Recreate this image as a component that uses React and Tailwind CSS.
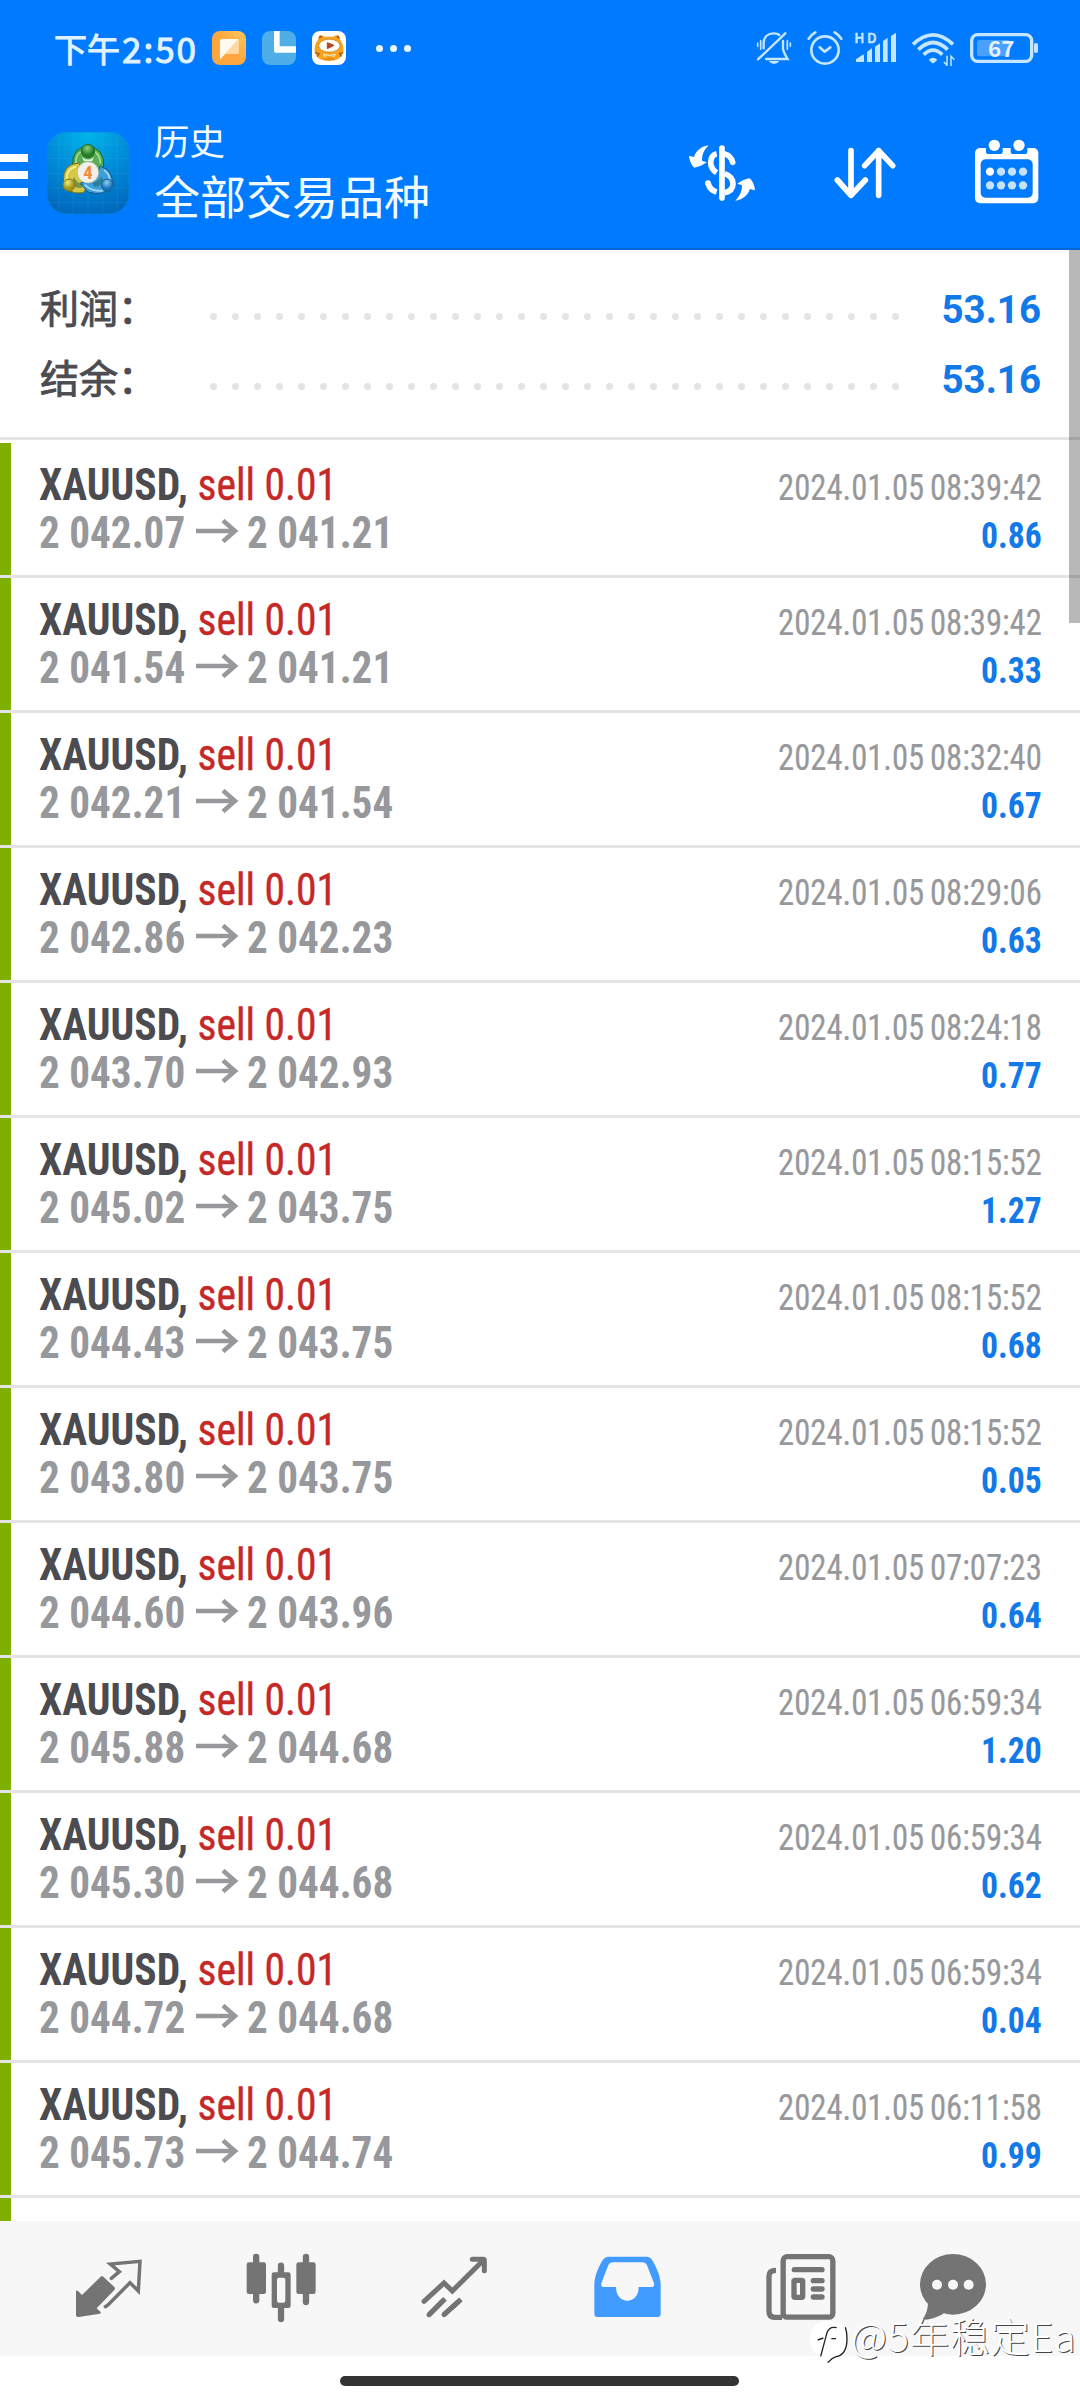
const deals = [
  ["2 042.07", "2 041.21", "2024.01.05 08:39:42", "0.86"],
  ["2 041.54", "2 041.21", "2024.01.05 08:39:42", "0.33"],
  ["2 042.21", "2 041.54", "2024.01.05 08:32:40", "0.67"],
  ["2 042.86", "2 042.23", "2024.01.05 08:29:06", "0.63"],
  ["2 043.70", "2 042.93", "2024.01.05 08:24:18", "0.77"],
  ["2 045.02", "2 043.75", "2024.01.05 08:15:52", "1.27"],
  ["2 044.43", "2 043.75", "2024.01.05 08:15:52", "0.68"],
  ["2 043.80", "2 043.75", "2024.01.05 08:15:52", "0.05"],
  ["2 044.60", "2 043.96", "2024.01.05 07:07:23", "0.64"],
  ["2 045.88", "2 044.68", "2024.01.05 06:59:34", "1.20"],
  ["2 045.30", "2 044.68", "2024.01.05 06:59:34", "0.62"],
  ["2 044.72", "2 044.68", "2024.01.05 06:59:34", "0.04"],
  ["2 045.73", "2 044.74", "2024.01.05 06:11:58", "0.99"],
];

function StatusBar() {
  return (
    <div className="flex h-24 items-center pl-[54px] pr-[41px]">
      <div className="-mt-px flex h-24 w-[158px] shrink-0 items-center whitespace-nowrap leading-[96px] text-[#e0f2ff] [-webkit-text-stroke:1px_#e0f2ff]">
        <span className="text-[33px]">下午</span>
        <span className="ml-[2px] text-[35px] tracking-[2px]">2:50</span>
      </div>
      <svg className="h-[34px] w-[34px]" viewBox="36 33 102 102">
        <defs>
          <linearGradient id="orange" x1="0" y1="1" x2="1" y2="0">
            <stop offset="0.5" stopColor="#ffa63f" />
            <stop offset="1" stopColor="#ffc95a" />
          </linearGradient>
        </defs>
        <rect x="36" y="33" width="102" height="102" rx="24" fill="url(#orange)" />
        <path d="M66 57H112Q117 57 117 62V97Q117 102 112 102H76L60 118V62Q60 57 66 57Z" fill="#ffd8a0" />
        <path d="M66 57H115L60 118V62Q60 57 66 57Z" fill="#fffaf0" />
      </svg>
      <svg className="ml-4 h-[34px] w-[34px]" viewBox="186 33 102 102">
        <rect x="186" y="33" width="102" height="102" rx="24" fill="#4faee8" />
        <path d="M222 33H239V79H288V98H228Q222 98 222 92Z" fill="#fff" />
      </svg>
      <svg className="ml-4 h-[34px] w-[34px]" viewBox="336 33 102 102">
        <rect x="336" y="33" width="102" height="102" rx="24" fill="#fffef8" />
        <path d="M354 60L358 47Q364 43 373 50H401Q410 43 416 47L421 60Q432 75 430 97Q424 122 387 123Q350 122 344 97Q342 75 354 60Z" fill="#f7a11e" />
        <path d="M357 55L361 49L366 52M410 52L414 49L418 55M346 98L357 101L352 110M429 98L419 101L424 110" fill="none" stroke="#a3561e" strokeWidth="4" />
        <ellipse cx="388" cy="77" rx="32" ry="19" fill="#fffdf4" stroke="#b5651d" strokeWidth="1.500" />
        <path d="M382 68L402 76L382 86Z" fill="#b0452c" stroke="#b0452c" strokeWidth="3" strokeLinejoin="round" />
        <path d="M369 103Q388 109 408 103M371 104l4 6 4-4M397 107l4 4 4-6" fill="none" stroke="#fff2ce" strokeWidth="3" />
        <path d="M374 119Q388 112 402 119" fill="none" stroke="#c97a1d" strokeWidth="3" />
      </svg>
      <div className="ml-[30px] flex gap-[7px]">
        <i className="h-[7px] w-[7px] rounded-full bg-[#e8f6ff]" />
        <i className="h-[7px] w-[7px] rounded-full bg-[#e8f6ff]" />
        <i className="h-[7px] w-[7px] rounded-full bg-[#e8f6ff]" />
      </div>
      <svg className="ml-auto h-9 w-[38px]" viewBox="45 30 114 108" fill="none" stroke="#c4e6ff" strokeWidth="7" strokeLinecap="round">
        <path d="M71 85V68C72 50 84 40 101 40C108 40 113 41 118 45M129 63V86C130 97 136 105 143 117H78" />
        <path d="M54 118L136 40" />
        <path d="M53 69V79M62 62V88M142 62V88M151 69V79" strokeWidth="5" />
        <path d="M86 123H118Q112 132 102 132Q92 132 86 123Z" fill="#c4e6ff" stroke="none" />
      </svg>
      <svg className="ml-[13px] h-9 w-[38px]" viewBox="198 30 114 108" fill="none" stroke="#c4e6ff" strokeWidth="8" strokeLinecap="round" strokeLinejoin="round">
        <circle cx="255" cy="90" r="41" />
        <path d="M239 82L254 95L271 82M206 56Q214 44 226 37M304 56Q296 44 284 37" />
      </svg>
      <svg className="ml-[10px] h-9 w-11 overflow-visible" viewBox="342 30 132 108" fill="#c4e6ff">
        <text x="343" y="69" fontSize="41" fontWeight="500" textLength="67" stroke="#c4e6ff" strokeWidth="1.500">HD</text>
        <path d="M348 126V118L368 104Q372 103 372 108V126ZM381 126V96L396 84V126ZM405 126V80L420 70V126ZM429 126V63L443 53V126ZM453 126V48L468 38V126Z" />
      </svg>
      <svg className="ml-3 h-9 w-[46px]" viewBox="510 30 138 108" fill="none" stroke="#c4e6ff" strokeWidth="11">
        <path d="M519 73Q579 16 639 73M535 89Q579 46 623 89M551 104Q579 77 607 104" />
        <path d="M566 119Q579 107 592 119L582 129Q579 131 576 129Z" fill="#c4e6ff" stroke="none" />
        <path d="M621 107V136L612 126M633 138V109L643 119" strokeWidth="4.500" />
      </svg>
      <svg className="ml-[13px] h-9 w-[70px]" viewBox="687 30 210 108">
        <rect x="695" y="44" width="180" height="80" rx="18" fill="none" stroke="#c4e6ff" strokeWidth="10" />
        <rect x="711" y="60" width="99" height="49" rx="7" fill="#4aa0ff" />
        <rect x="882" y="69" width="12" height="30" rx="6" fill="#c4e6ff" />
        <text x="744" y="110" fontSize="65" fontWeight="700" fill="#e2f3ff" textLength="79" lengthAdjust="spacingAndGlyphs">67</text>
      </svg>
    </div>
  );
}

function AppLogo() {
  return (
    <svg className="ml-[18px] mt-[35px] h-[84px] w-[84px] shrink-0" viewBox="138 33 252 252">
      <defs>
        <radialGradient id="bg" cx="0.5" cy="0" r="1">
          <stop offset="0" stopColor="#00b5ea" />
          <stop offset="0.55" stopColor="#0089d6" />
          <stop offset="1" stopColor="#0068bd" />
        </radialGradient>
        <radialGradient id="gr" cx="0.45" cy="0.3"><stop offset="0" stopColor="#8fd07c" /><stop offset="1" stopColor="#237d2a" /></radialGradient>
        <radialGradient id="ye" cx="0.4" cy="0.3"><stop offset="0" stopColor="#f2ea7c" /><stop offset="1" stopColor="#a39418" /></radialGradient>
        <radialGradient id="bl" cx="0.45" cy="0.3"><stop offset="0" stopColor="#8fd0f2" /><stop offset="1" stopColor="#1a70b8" /></radialGradient>
      </defs>
      <rect x="141" y="36" width="246" height="246" rx="58" fill="url(#bg)" stroke="#0a86e6" strokeWidth="2" />
      <path d="M176 45V272M220 37V281M264 37V281M308 37V281M352 45V272M142 72H386M142 116H386M142 160H386M142 204H386M142 248H386" stroke="#7fdcff" strokeOpacity=".16" strokeWidth="2" />
      <path d="M218 138Q214 82 264 80Q314 82 311 142L264 170Z" fill="#58ad55" stroke="#1c6426" strokeWidth="3" />
      <path d="M228 130Q226 92 264 91Q300 92 301 130" fill="none" stroke="#a6dc98" strokeWidth="5" />
      <path d="M236 129Q188 132 190 184Q200 226 250 218L272 184Z" fill="#d3c946" stroke="#776f18" strokeWidth="3" />
      <path d="M228 140Q198 146 201 178" fill="none" stroke="#f4ee98" strokeWidth="5" />
      <path d="M300 138Q342 152 337 196Q314 232 264 216L240 190L290 172Z" fill="#3f9fdc" stroke="#14568c" strokeWidth="3" />
      <path d="M254 194Q276 216 308 212M312 150Q328 160 329 180" fill="none" stroke="#a4dcf6" strokeWidth="5" />
      <path d="M222 170Q230 190 250 192L244 204Q224 206 214 190ZM276 188Q296 184 304 170L312 182Q300 200 284 200Z" fill="#245f52" fillOpacity=".5" />
      <path d="M246 112Q264 126 282 112L276 124H252Z" fill="#e0f3e0" />
      <circle cx="264" cy="93" r="20" fill="url(#gr)" stroke="#1f6a25" strokeWidth="3" />
      <circle cx="207" cy="195" r="18" fill="url(#ye)" stroke="#857a17" strokeWidth="3" />
      <circle cx="322" cy="195" r="18" fill="url(#bl)" stroke="#15609a" strokeWidth="3" />
      <circle cx="264" cy="157" r="32" fill="#f3f0ea" stroke="#a9b79c" strokeWidth="2" />
      <text x="264" y="177" textAnchor="middle" fontSize="56" fontWeight="700" fill="#f08c3c" className="font-['Roboto_Condensed','Roboto',sans-serif]">4</text>
    </svg>
  );
}

function TitleBar() {
  return (
    <div className="flex h-[154px] items-start border-b-2 border-[#0a68d2]">
      <div className="mt-[58px] flex w-7 shrink-0 flex-col gap-[9px]">
        <i className="h-2 bg-white" />
        <i className="h-2 bg-white" />
        <i className="h-2 bg-white" />
      </div>
      <AppLogo />
      <div className="ml-6 mt-[22px] whitespace-nowrap text-[#f2fbff]">
        <div className="text-[35.500px] leading-[44px]">历史</div>
        <div className="mt-[2px] text-[46px] leading-[60px]">全部交易品种</div>
      </div>
      <svg className="ml-auto mt-[46px] h-[62px] w-[72px]" viewBox="18 36 216 186" fill="none" stroke="#fff" strokeWidth="17">
        <path d="M126 54V204" strokeWidth="17" strokeLinecap="round" />
        <path d="M110 71Q92 75 92 99Q93 117 110 128" />
        <path d="M134 72Q152 75 158 97" strokeLinecap="round" />
        <path d="M84 159Q89 180 110 186" />
        <circle cx="84" cy="159" r="8.500" fill="#fff" stroke="none" />
        <path d="M134 131Q159 140 159 162Q158 183 134 188" />
        <path id="swap" d="M86 46C66 48 48 62 42 81L27 77C28 92 34 105 43 113C56 111 70 105 80 97L66 92C66 74 72 60 86 46Z" fill="#fff" stroke="none" />
        <use href="#swap" transform="rotate(180 126 129)" />
      </svg>
      <svg className="ml-[74px] mt-[50px] h-[54px] w-[66px]" viewBox="456 48 198 162" fill="none" stroke="#fff" strokeWidth="17" strokeLinecap="round" strokeLinejoin="round">
        <path d="M513 62V196M472 150L513 196L556 150M596 196V62M554 107L596 62L638 107" />
      </svg>
      <svg className="ml-[75px] mr-[39px] mt-[42px] h-[68px] w-[68px]" viewBox="879 24 204 204">
        <rect x="885" y="54" width="190" height="166" rx="15" fill="#fff" />
        <path d="M918 50H968V66Q968 72 962 72H924Q918 72 918 66ZM992 50H1042V66Q1042 72 1036 72H998Q992 72 992 66Z" fill="#007aff" />
        <rect x="902" y="88" width="156" height="115" rx="15" fill="#007aff" />
        <circle cx="943" cy="46" r="17" fill="#fff" />
        <circle cx="1017" cy="46" r="17" fill="#fff" />
        <circle cx="930" cy="125" r="12.500" fill="#fff" />
        <g fill="#c6e2ff">
          <circle cx="963" cy="125" r="12.500" />
          <circle cx="996" cy="125" r="12.500" />
          <circle cx="1029" cy="125" r="12.500" />
          <circle cx="930" cy="166" r="12.500" />
          <circle cx="963" cy="166" r="12.500" />
          <circle cx="996" cy="166" r="12.500" />
          <circle cx="1029" cy="166" r="12.500" />
        </g>
      </svg>
    </div>
  );
}

function SummaryRow({ label, value }) {
  return (
    <div className="flex h-[70px] items-start pl-[40px] pr-[39px]">
      <span className="w-[170px] whitespace-nowrap text-[39px] leading-[70px] text-[#4c4b50] [-webkit-text-stroke:0.9px_#4c4b50]">{label}</span>
      <span className="mt-[42px] flex gap-[15px]">
        {Array.from({ length: 32 }, (_, i) => (
          <i key={i} className="h-[7px] w-[7px] rounded-full bg-[#e4e4e4]" />
        ))}
      </span>
      <span className="ml-auto pt-[4px] font-['Roboto',sans-serif] text-[38.500px] font-bold leading-[70px] text-[#1279e8]">{value}</span>
    </div>
  );
}

function Deal({ open, close, time, profit }) {
  return (
    <div className="flex h-[135px] flex-col font-['Roboto_Condensed','Roboto',sans-serif]">
      <div className="flex h-[132px] justify-between border-l-[11px] border-[#7fb000] pl-[28px] pr-[38px]">
        <div className="whitespace-nowrap pt-[18px] text-[44px] leading-[48px]">
          <div className="origin-left scale-x-[0.945]">
            <span className="font-bold text-[#4c4b50]">XAUUSD, </span>
            <span className="text-[#c62828] [-webkit-text-stroke:0.4px_#c62828]">sell 0.01</span>
          </div>
          <div className="flex items-center font-bold text-[#97989c]">
            <span className="w-[157px] origin-left scale-x-[0.935]">{open}</span>
            <svg className="mr-[8px] mt-[-5px] h-6 w-[43px]" viewBox="0 0 43 24" fill="none" stroke="#97989c" strokeWidth="4.500">
              <path d="M0 12H39M27 1.500L39 12L27 22.500" />
            </svg>
            <span className="inline-block origin-left scale-x-[0.935]">{close}</span>
          </div>
        </div>
        <div className="whitespace-nowrap pt-[21px] text-right text-[36px] leading-[48px]">
          <div className="origin-right scale-x-[0.907] text-[#97989c] [-webkit-text-stroke:0.2px_#97989c] [word-spacing:-2px]">{time}</div>
          <div className="origin-right scale-x-[0.935] font-bold text-[#1279e8]">{profit}</div>
        </div>
      </div>
      <div className="h-[3px] bg-[#e4e4e4]" />
    </div>
  );
}

function NavBar() {
  return (
    <div className="flex h-[135px] items-start bg-[#f7f7f7] pl-[73px] pt-[31px]">
      <svg className="h-[72px] w-[72px]" viewBox="39 36 216 216" fill="#747474">
        <path d="M122 110Q126 106 130 110L163 141Q167 146 163 150L110 205L122 216Q123 220 120 221L56 231Q48 231 48 224V153Q51 150 54 153L66 165Z" />
        <path d="M154 115L178 95L151 72L240 64L235 153L210 128L144 195L136 200" fill="none" stroke="#747474" strokeWidth="10.500" strokeLinecap="round" />
      </svg>
      <svg className="ml-[99px] h-[72px] w-[74px]" viewBox="552 36 222 216" fill="#747474">
        <path d="M588.500 51V181M663 77V237M738 51V186" stroke="#747474" strokeWidth="19" strokeLinecap="round" />
        <rect x="560" y="67" width="58" height="95" rx="7" />
        <rect x="709" y="67" width="58" height="95" rx="7" />
        <rect x="635" y="97" width="57" height="107" rx="7" />
        <rect x="651" y="113" width="25" height="75" rx="6" fill="#f7f7f7" />
      </svg>
      <svg className="ml-[101px] h-[72px] w-[70px]" viewBox="1077 36 210 216" fill="none" stroke="#747474" strokeWidth="15" strokeLinecap="round">
        <path d="M1092 184L1152 129L1177 153L1270 61" />
        <path d="M1237 58H1270Q1273 58 1273 61V92" />
        <path d="M1107 224L1155 176M1152 224L1203 178" strokeLinecap="butt" />
        <path d="M1107 224L1148 183M1152 224L1196 184" />
      </svg>
      <svg className="ml-[103px] h-[72px] w-[71px]" viewBox="36 36 213 216">
        <path fillRule="evenodd" fill="#429cff" d="M84 50H202Q210 50 215 58C230 82 242 110 242 135V222Q242 231 233 231H52Q43 231 43 222V135C43 110 55 80 70 58Q76 50 84 50ZM99 67Q88 67 84 78L64 130Q62 141 72 141H108C108 168 124 182 142 182C160 182 176 168 176 141H216Q224 141 222 130L201 76Q198 67 185 67Z" />
      </svg>
      <svg className="ml-[101px] h-[72px] w-[74px]" viewBox="552 36 222 216" fill="none" stroke="#747474" strokeWidth="16" strokeLinecap="round">
        <rect x="609.500" y="50" width="149" height="181.500" rx="12" />
        <path d="M588 91Q567 91 567 108V214Q567 232 584 232H606" strokeLinecap="butt" />
        <path d="M643 89H726M700 122H726M700 147H726M700 171H726" />
        <rect x="642" y="121" width="26" height="51" rx="3" />
      </svg>
      <svg className="ml-[80px] h-[72px] w-[70px]" viewBox="1014 36 210 216" fill="#747474">
        <ellipse cx="1119" cy="133" rx="99" ry="91" />
        <path d="M1044 192Q1042 222 1025 240Q1062 238 1090 221L1090 190Z" />
        <g fill="#f7f7f7">
          <circle cx="1071" cy="134" r="15" />
          <circle cx="1119" cy="134" r="15" />
          <circle cx="1166" cy="134" r="15" />
        </g>
      </svg>
    </div>
  );
}

function Watermark() {
  return (
    <div className="absolute left-[810px] top-[2308px] flex h-[60px] items-start whitespace-nowrap">
      <svg className="mt-[12px] h-[44px] w-[41px]" viewBox="690 240 123 132" fill="none">
        <path d="M745 243C782 243 801 262 801 296C801 335 785 347 768 350Q757 352 745 364L748 350C710 352 690 332 690 297C690 262 710 243 745 243Z" fill="#fff" />
        <path d="M796 262Q801 275 801 296C801 335 785 347 768 350Q755 354 743 368" stroke="#222" strokeWidth="4" />
        <path d="M770 263Q748 258 741 278L722 349M713 300L730 294M754 296H768" stroke="#222" strokeWidth="4" />
      </svg>
      <span className="text-[39.500px] font-light leading-[54px] tracking-[0.800px] text-white [text-shadow:1px_1px_0_#444]">@5年稳定Ea</span>
    </div>
  );
}

export default function App() {
  return (
    <div className="relative flex h-[2400px] w-[1080px] flex-col overflow-hidden bg-white font-['Noto_Sans_CJK_SC',sans-serif]">
      <header className="h-[250px] shrink-0 bg-[#007aff]">
        <StatusBar />
        <TitleBar />
      </header>
      <section className="h-[190px] shrink-0 border-b-[3px] border-[#e4e4e4] pt-[21px]">
        <SummaryRow label="利润：" value="53.16" />
        <SummaryRow label="结余：" value="53.16" />
      </section>
      <main className="mt-[3px] h-[1778px] shrink-0 overflow-hidden">
        {deals.map(([open, close, time, profit], i) => (
          <Deal key={i} open={open} close={close} time={time} profit={profit} />
        ))}
        <div className="h-6 w-[11px] bg-[#7fb000]" />
      </main>
      <NavBar />
      <div className="ml-[340px] mt-5 h-[10px] w-[399px] rounded-full bg-[#333]" />
      <div className="absolute right-0 top-[250px] h-[373px] w-[11px] bg-black/28" />
      <Watermark />
    </div>
  );
}
